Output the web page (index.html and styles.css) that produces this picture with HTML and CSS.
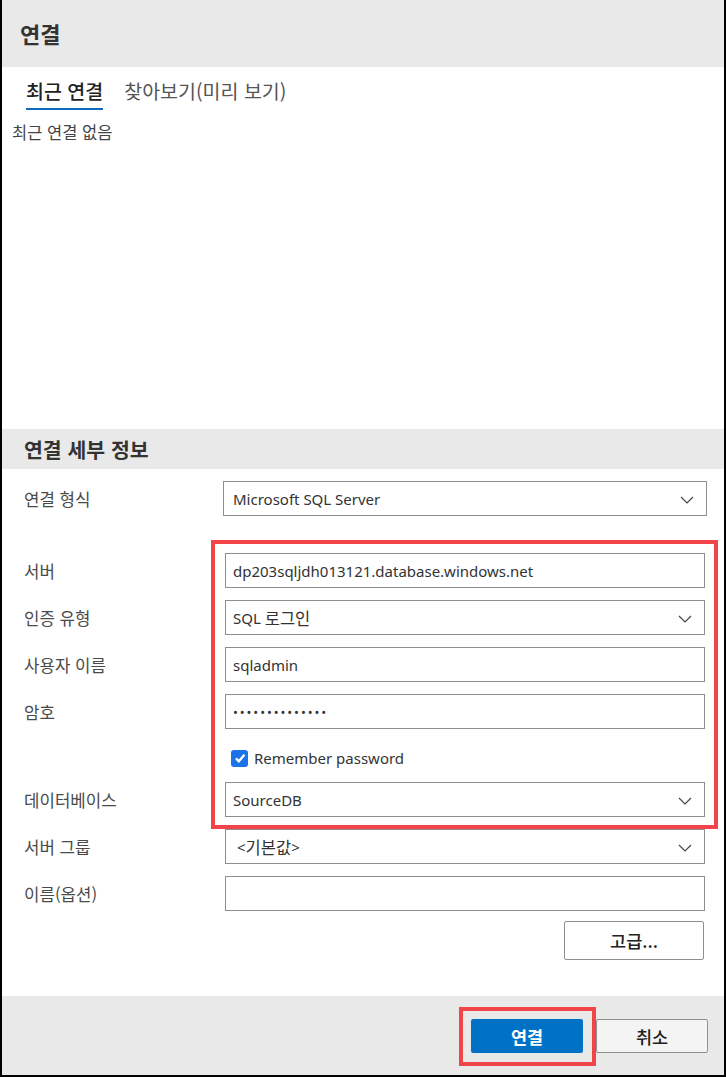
FILE: index.html
```html
<!DOCTYPE html>
<html lang="ko">
<head>
<meta charset="utf-8">
<title>연결</title>
<link rel="stylesheet" href="styles.css">
</head>
<body>
<div class="dialog">
  <div class="header"><h1 class="title">연결</h1></div>
  <div class="tabs">
    <div class="tab active">최근 연결</div>
    <div class="tab">찾아보기(미리 보기)</div>
  </div>
  <div class="recent">최근 연결 없음</div>
  <div class="spacer"></div>
  <div class="section-title">연결 세부 정보</div>
  <div class="form">
    <div class="row row-first">
      <div class="label">연결 형식</div>
      <div class="field select wide">Microsoft SQL Server<svg class="chev" viewBox="0 0 14 8"><polyline points="1,1 7,7 13,1"/></svg></div>
    </div>
    <div class="row row-gap">
      <div class="label">서버</div>
      <div class="field">dp203sqljdh013121.database.windows.net</div>
    </div>
    <div class="row">
      <div class="label">인증 유형</div>
      <div class="field select">SQL&nbsp;<span class="ko">로그인</span><svg class="chev" viewBox="0 0 14 8"><polyline points="1,1 7,7 13,1"/></svg></div>
    </div>
    <div class="row">
      <div class="label">사용자 이름</div>
      <div class="field">sqladmin</div>
    </div>
    <div class="row">
      <div class="label">암호</div>
      <div class="field password">••••••••••••••</div>
    </div>
    <div class="row check-row">
      <div class="label"></div>
      <label class="check"><span class="box"><svg viewBox="0 0 12 12"><polyline points="2.5,6.3 5,8.8 9.8,3.2"/></svg></span>Remember password</label>
    </div>
    <div class="row after-check">
      <div class="label">데이터베이스</div>
      <div class="field select">SourceDB<svg class="chev" viewBox="0 0 14 8"><polyline points="1,1 7,7 13,1"/></svg></div>
    </div>
    <div class="row">
      <div class="label">서버 그룹</div>
      <div class="field select group">&lt;<span class="ko">기본값</span>&gt;<svg class="chev" viewBox="0 0 14 8"><polyline points="1,1 7,7 13,1"/></svg></div>
    </div>
    <div class="row">
      <div class="label">이름(옵션)</div>
      <div class="field"></div>
    </div>
    <div class="adv-row"><button class="btn adv">고급...</button></div>
    <div class="highlight hl-form"></div>
  </div>
  <div class="footer">
    <button class="btn primary">연결</button>
    <button class="btn secondary">취소</button>
    <div class="highlight hl-connect"></div>
  </div>
</div>
</body>
</html>
```
FILE: styles.css
```css
* { box-sizing: border-box; }
html, body { margin: 0; padding: 0; background: #fff; }
body {
  font-family: "Noto Sans", "Noto Sans CJK KR", sans-serif;
  color: #333;
}
.dialog {
  width: 726px;
  height: 1077px;
  border-left: 2px solid #000;
  border-right: 2px solid #000;
  border-bottom: 2px solid #000;
  display: flex;
  flex-direction: column;
  position: relative;
  overflow: hidden;
}
.header {
  height: 67px;
  background: #e9e9e9;
  display: flex;
  align-items: center;
  padding-left: 18px;
  flex: none;
}
.title {
  margin: 0;
  font-family: "Noto Sans CJK KR", sans-serif;
  font-size: 22px;
  font-weight: 700;
  color: #333;
  padding-bottom: 1px;
}
.tabs {
  display: flex;
  gap: 21px;
  padding-left: 24px;
  height: 45px;
  align-items: flex-start;
  padding-top: 11px;
  flex: none;
}
.tab {
  font-family: "Noto Sans CJK KR", sans-serif;
  font-size: 19.5px;
  line-height: 26px;
  color: #555;
  padding-bottom: 4px;
}
.tab.active {
  color: #222;
  font-weight: 500;
  border-bottom: 2px solid #0f6cbd;
}
.recent {
  font-family: "Noto Sans CJK KR", sans-serif;
  font-size: 16.5px;
  color: #444;
  padding-left: 10px;
  padding-top: 9px;
  line-height: 22px;
}
.spacer { flex: 1; }
.section-title {
  height: 40px;
  background: #e9e9e9;
  display: flex;
  align-items: center;
  padding-left: 22px;
  font-family: "Noto Sans CJK KR", sans-serif;
  font-size: 20.5px;
  font-weight: 700;
  color: #333;
  flex: none;
}
.form {
  position: relative;
  padding: 12px 0 36px 22px;
  flex: none;
}
.row {
  display: flex;
  align-items: center;
  height: 35px;
  margin-top: 12px;
}
.row-first { margin-top: 0; }
.row-gap { margin-top: 37px; }
.label {
  width: 199px;
  flex: none;
  font-family: "Noto Sans CJK KR", sans-serif;
  font-size: 16.8px;
  color: #4a4a4a;
}
.field {
  width: 480px;
  height: 100%;
  border: 1px solid #8f8f8f;
  display: flex;
  align-items: center;
  padding-left: 7px;
  font-family: "Noto Sans", "Noto Sans CJK KR", sans-serif;
  font-size: 15px;
  color: #333;
  position: relative;
  margin-left: 2px;
  white-space: pre;
}
.ko {
  font-family: "Noto Sans CJK KR", sans-serif;
  font-size: 16.5px;
}
.field.group { padding-left: 11px; }
.field.wide { margin-left: 0; width: 484px; padding-left: 9px; }
.field.password { letter-spacing: 1.9px; font-size: 13px; }
.chev {
  position: absolute;
  right: 12px;
  top: 50%;
  width: 14px;
  height: 8px;
  margin-top: -3px;
  fill: none;
  stroke: #444;
  stroke-width: 1.2;
}
.check-row { height: 30px; margin-top: 14px; }
.row.after-check { margin-top: 9px; }
.check {
  display: flex;
  align-items: center;
  gap: 6px;
  margin-left: 8px;
  font-size: 15px;
  color: #333;
}
.box {
  width: 17px;
  height: 17px;
  border-radius: 3px;
  background: #1a73e8;
  display: flex;
  align-items: center;
  justify-content: center;
}
.box svg {
  width: 14px;
  height: 14px;
  fill: none;
  stroke: #fff;
  stroke-width: 2;
}
.adv-row {
  display: flex;
  justify-content: flex-end;
  margin-top: 10px;
  padding-right: 20px;
}
.btn {
  font-family: "Noto Sans CJK KR", sans-serif;
  font-size: 17.5px;
  border-radius: 2px;
  cursor: pointer;
}
.adv {
  width: 140px;
  height: 39px;
  background: #fff;
  border: 1px solid #8f8f8f;
  color: #222;
  font-weight: 500;
}
.footer {
  height: 79px;
  background: #e9e9e9;
  flex: none;
  display: flex;
  justify-content: flex-end;
  align-items: flex-start;
  padding-top: 23px;
  padding-right: 16px;
  gap: 13px;
  position: relative;
}
.primary {
  width: 112px;
  height: 34px;
  background: #0072c6;
  border: none;
  color: #fff;
  font-weight: 700;
}
.secondary {
  width: 112px;
  height: 34px;
  background: #f4f4f4;
  border: 1px solid #8f8f8f;
  color: #222;
  font-weight: 500;
}
.highlight {
  position: absolute;
  border: 4px solid #f34549;
  pointer-events: none;
}
.hl-form {
  left: 209px;
  top: 71px;
  width: 507px;
  height: 289px;
}
.hl-connect {
  left: 457px;
  top: 11px;
  width: 137px;
  height: 59px;
}
```
